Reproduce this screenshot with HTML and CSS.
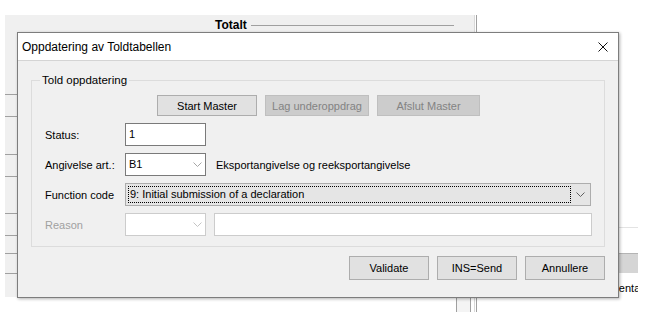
FILE: index.html
```html
<!DOCTYPE html>
<html lang="no">
<head>
    <meta charset="UTF-8">
    <title>Oppdatering av Toldtabellen</title>
    <link rel="stylesheet" href="styles.css">
</head>
<body>
<div class="desk">

    <!-- Hovedvinduet bak dialogen -->
    <div class="app">
        <div class="pane-left">
            <div class="totalt">
                <span class="totalt-label">Totalt</span>
                <span class="totalt-line"></span>
            </div>
            <div class="list">
                <div class="list-row row-63"></div>
                <div class="list-row row-22"></div>
                <div class="list-row row-38"></div>
                <div class="list-row row-22"></div>
                <div class="list-row row-37"></div>
                <div class="list-row row-22"></div>
                <div class="list-row row-18"></div>
                <div class="list-row row-20"></div>
            </div>
            <div class="pane-fill"></div>
            <div class="pane-foot">
                <span class="foot-space"></span>
                <span class="foot-scroll"></span>
            </div>
        </div>
        <div class="splitter"></div>
        <div class="pane-right">
            <div class="grid">
                <div class="grid-top"></div>
                <div class="grid-head"></div>
                <div class="grid-row">Dokumentasjon</div>
            </div>
        </div>
    </div>

    <!-- Dialog -->
    <div class="dialog">
        <div class="dialog-title">
            <span>Oppdatering av Toldtabellen</span>
            <svg class="close-icon" width="10" height="10" viewBox="0 0 10 10">
                <path d="M0.5 0.5 L9.5 9.5 M9.5 0.5 L0.5 9.5" stroke="#111" stroke-width="1" fill="none"/>
            </svg>
        </div>
        <div class="dialog-body">
            <fieldset class="group">
                <legend>Told oppdatering</legend>
                <div class="master-buttons">
                    <button class="btn btn-master">Start Master</button>
                    <button class="btn btn-master btn-lag" disabled>Lag underoppdrag</button>
                    <button class="btn btn-master btn-afslut" disabled>Afslut Master</button>
                </div>
                <div class="field-row">
                    <label class="field-label">Status:</label>
                    <div class="textbox small">1</div>
                </div>
                <div class="field-row">
                    <label class="field-label">Angivelse art.:</label>
                    <div class="combo small">
                        <span class="combo-text">B1</span>
                        <svg class="chevron" width="9" height="5" viewBox="0 0 9 5"><polyline points="0.5,0.5 4.5,4.5 8.5,0.5" fill="none" stroke="#a6a6a6"/></svg>
                    </div>
                    <span class="field-note">Eksportangivelse og reeksportangivelse</span>
                </div>
                <div class="field-row">
                    <label class="field-label">Function code</label>
                    <div class="combo combo-list wide">
                        <span class="combo-focus">9: Initial submission of a declaration</span>
                        <svg class="chevron" width="9" height="5" viewBox="0 0 9 5"><polyline points="0.5,0.5 4.5,4.5 8.5,0.5" fill="none" stroke="#606060"/></svg>
                    </div>
                </div>
                <div class="field-row">
                    <label class="field-label disabled">Reason</label>
                    <div class="combo small disabled">
                        <span class="combo-text"></span>
                        <svg class="chevron" width="9" height="5" viewBox="0 0 9 5"><polyline points="0.5,0.5 4.5,4.5 8.5,0.5" fill="none" stroke="#c4c4c4"/></svg>
                    </div>
                    <div class="textbox reason disabled"></div>
                </div>
            </fieldset>
            <div class="dialog-actions">
                <button class="btn btn-action">Validate</button>
                <button class="btn btn-action">INS=Send</button>
                <button class="btn btn-action">Annullere</button>
            </div>
        </div>
    </div>

</div>
</body>
</html>
```

FILE: styles.css
```css
* {
    box-sizing: border-box;
}
body {
    margin: 0;
    background: #fff;
    font-family: "Liberation Sans", Arial, sans-serif;
    font-size: 11px;
    color: #000;
}
.desk {
    position: relative;
    width: 652px;
    height: 312px;
    overflow: hidden;
}

/* hovedvindu */
.app {
    position: absolute;
    left: 5px;
    top: 15px;
    width: 647px;
    height: 297px;
    display: flex;
}
.pane-left {
    width: 469px;
    flex-shrink: 0;
    display: flex;
    flex-direction: column;
    background: #f0f0f0;
}
.totalt {
    height: 17px;
    display: flex;
    align-items: center;
    padding: 3px 20px 0 210px;
}
.totalt-label {
    font-family: "Liberation Sans", Arial, sans-serif;
    font-weight: bold;
    font-size: 12px;
    line-height: 13px;
}
.totalt-line {
    flex: 1;
    height: 1px;
    margin-left: 4px;
    background: #a0a0a0;
}
.list-row {
    border-bottom: 1px solid #a0a0a0;
}
.row-63 { height: 63px; }
.row-22 { height: 22px; }
.row-38 { height: 38px; }
.row-37 { height: 37px; }
.row-18 { height: 18px; }
.row-20 { height: 20px; }
.pane-fill {
    flex: 1;
}
.pane-foot {
    height: 15px;
    display: flex;
    background: #fff;
}
.foot-space {
    width: 451px;
}
.foot-scroll {
    width: 15px;
    background: #f4f4f4;
    border-left: 1px solid #a0a0a0;
    border-right: 1px solid #a0a0a0;
}
.splitter {
    width: 3px;
    flex-shrink: 0;
    border-left: 1px solid #d9d9d9;
    border-right: 1px solid #a0a0a0;
    background: #fff;
}
.pane-right {
    flex: 1;
    min-width: 0;
    overflow: hidden;
    background: #fff;
    padding: 212px 14px 0 0;
}
.grid {
    overflow: hidden;
}
.grid-top {
    height: 26px;
    border-top: 1px solid #e3e3e3;
}
.grid-head {
    height: 20px;
    background: #d5d5d5;
    border-top: 1px solid #b4b4b4;
}
.grid-row {
    height: 24px;
    padding: 8px 0 0 107px;
    line-height: 14px;
    white-space: nowrap;
}

/* dialog */
.dialog {
    position: absolute;
    left: 17px;
    top: 32px;
    width: 602px;
    height: 266px;
    background: #f0f0f0;
    border: 1px solid #7d7d7d;
    box-shadow: 1px 1px 3px rgba(0, 0, 0, 0.3);
}
.dialog-title {
    height: 28px;
    display: flex;
    align-items: center;
    justify-content: space-between;
    padding: 0 10px 0 4px;
    background: #fff;
    border-bottom: 1px solid #d4d4d4;
    font-family: "Liberation Sans", Arial, sans-serif;
    font-size: 12px;
}
.dialog-body {
    padding: 12px 13px 0;
}
.group {
    margin: 0;
    min-width: 0;
    padding: 0 0 10px;
    border: 1px solid #dcdcdc;
}
.group legend {
    margin-left: 8px;
    padding: 0 2px;
    font-family: "Liberation Sans", Arial, sans-serif;
    font-size: 11.5px;
    line-height: 14px;
}
.master-buttons {
    display: flex;
    gap: 8px;
    margin-top: 8px;
    padding-left: 125px;
}
.btn {
    font-family: "Liberation Sans", Arial, sans-serif;
    font-size: 11px;
    color: #000;
    background: #e1e1e1;
    border: 1px solid #adadad;
    padding: 0;
}
.btn:disabled {
    background: #cccccc;
    border-color: #bfbfbf;
    color: #838383;
}
.btn-master {
    width: 100px;
    height: 21px;
}
.btn-lag {
    width: 104px;
}
.btn-afslut {
    width: 103px;
}
.field-row {
    display: flex;
    align-items: center;
    height: 23px;
    margin-top: 7px;
    padding-left: 13px;
}
.field-label {
    width: 80px;
}
.field-label.disabled {
    color: #a0a0a0;
}
.textbox,
.combo {
    height: 23px;
    background: #fff;
    border: 1px solid #7a7a7a;
    padding-left: 3px;
    line-height: 21px;
}
.small {
    width: 81px;
}
.combo {
    display: flex;
    align-items: center;
    justify-content: space-between;
    padding-right: 3px;
}
.combo.disabled,
.textbox.disabled {
    border-color: #cccccc;
}
.wide {
    width: 466px;
}
.combo-list {
    background: #e5e5e5;
    border-color: #adadad;
    padding-left: 2px;
    padding-right: 5px;
}
.combo-focus {
    width: 443px;
    height: 17px;
    line-height: 15px;
    padding-left: 1px;
    border: 1px dotted #000;
}
.textbox.reason {
    width: 378px;
    margin-left: 8px;
}
.field-note {
    margin-left: 10px;
}
.dialog-actions {
    display: flex;
    justify-content: flex-end;
    gap: 8px;
    margin-top: 9px;
}
.btn-action {
    width: 80px;
    height: 24px;
}
```
